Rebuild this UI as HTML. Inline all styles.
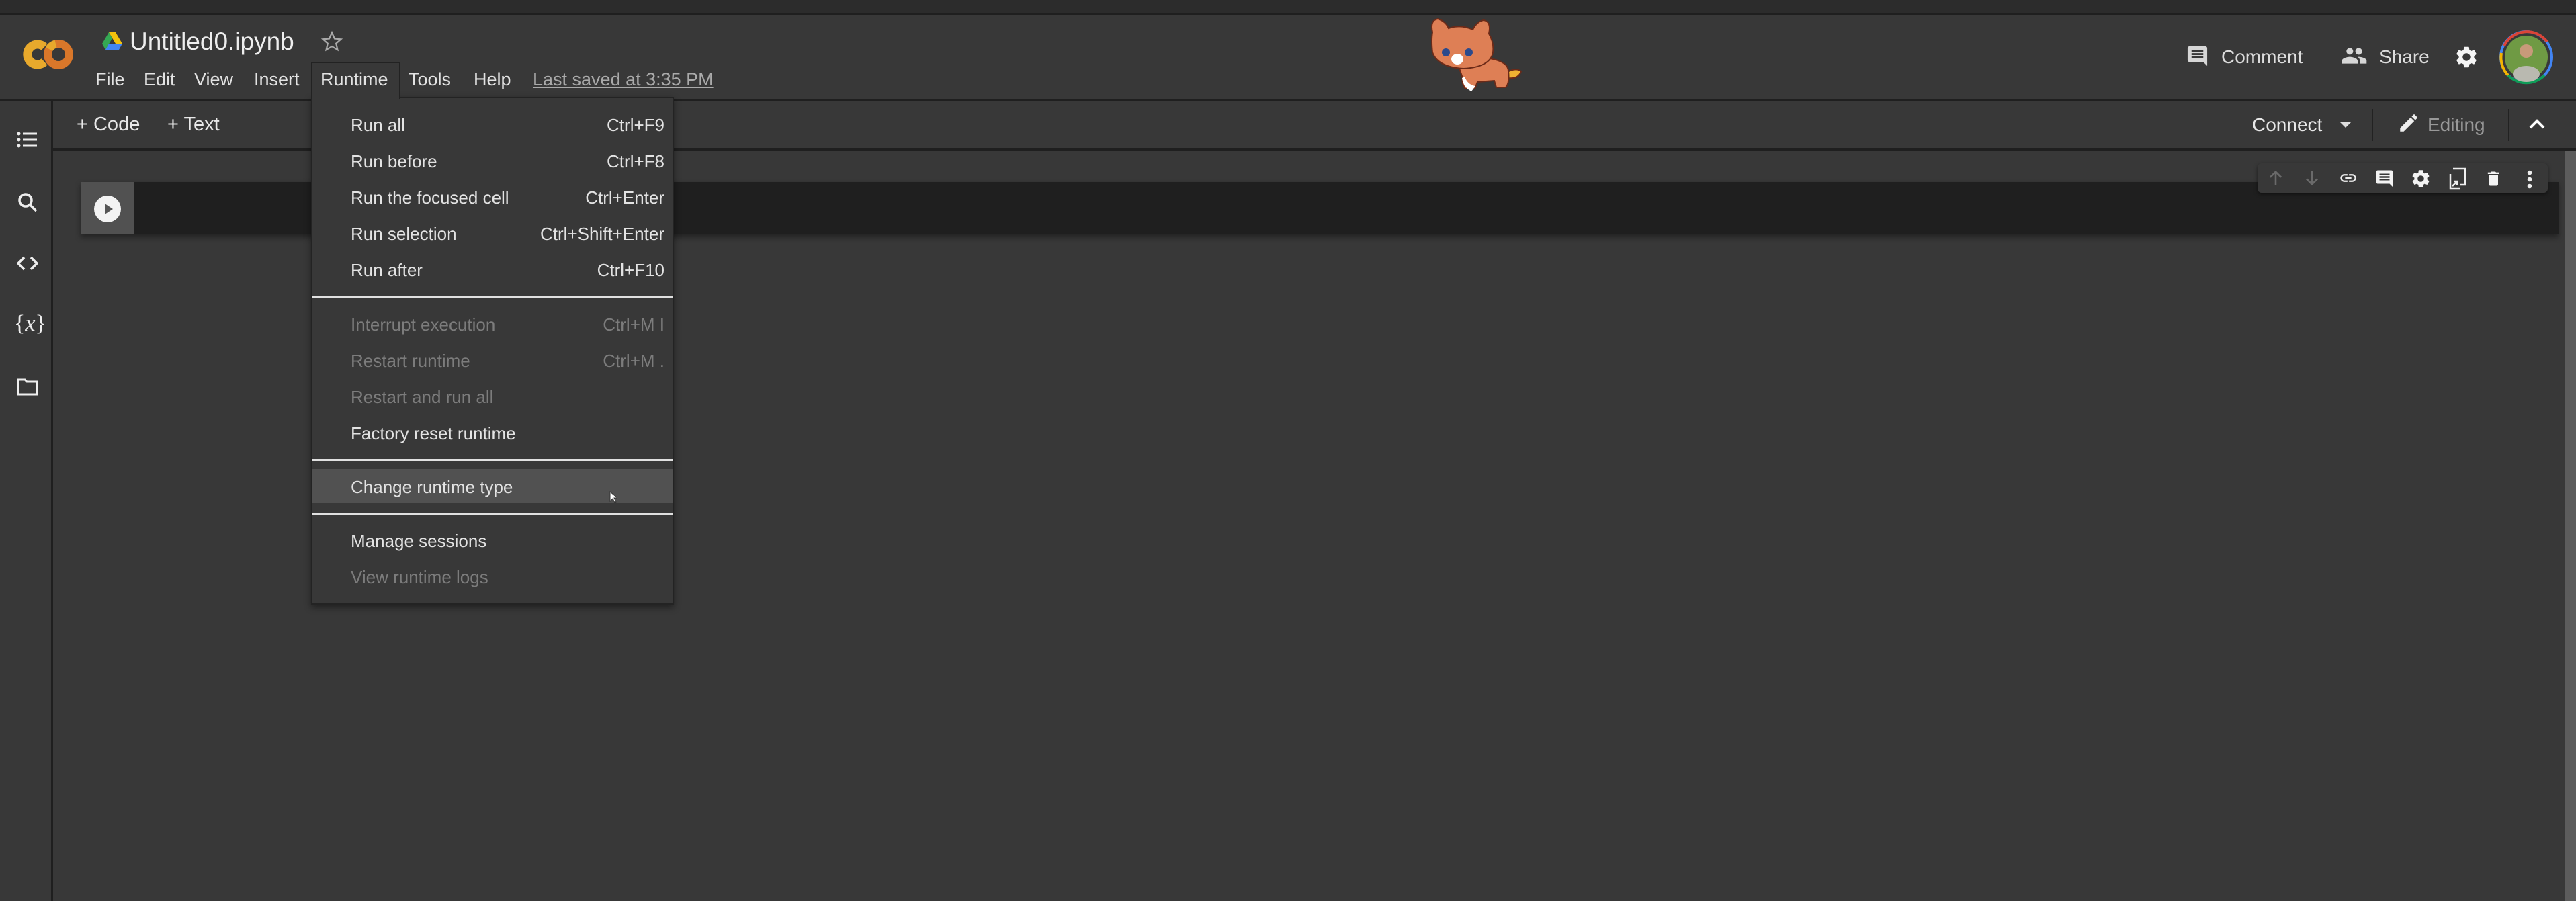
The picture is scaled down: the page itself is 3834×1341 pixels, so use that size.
<!DOCTYPE html>
<html><head><meta charset="utf-8"><style>
*{margin:0;padding:0;box-sizing:border-box}
body{width:3834px;height:1341px;background:#383838;font-family:"Liberation Sans",sans-serif;color:#e3e3e3;position:relative;overflow:hidden}
.a{position:absolute}
.t{position:absolute;white-space:nowrap}
svg{position:absolute;display:block}
.mi{position:absolute;left:522px;font-size:26px;line-height:30px;color:#e3e3e3}
.sc{position:absolute;right:14px;font-size:26px;line-height:30px;color:#e3e3e3}
.dis{color:#7c7c7c}
.sep{position:absolute;left:2px;right:2px;height:3px;background:#e0e0e0}
</style></head><body>
<div class="a" style="left:0;top:0;width:3834px;height:19px;background:#2c2c2c"></div>
<div class="a" style="left:0;top:19px;width:3834px;height:3px;background:#1f1f1f"></div>
<div class="a" style="left:0;top:148px;width:3834px;height:3px;background:#1f1f1f"></div>
<div class="a" style="left:77px;top:221px;width:3757px;height:3px;background:#1f1f1f"></div>
<div class="a" style="left:76px;top:151px;width:3px;height:1190px;background:#1f1f1f"></div>

<!-- logo -->
<svg style="left:28px;top:56px" width="84" height="50" viewBox="0 0 84 50">
<path d="M38 14 A15 15 0 1 0 38 36" fill="none" stroke="#e8a92c" stroke-width="13"/>
<circle cx="59" cy="25" r="16" fill="none" stroke="#d9772a" stroke-width="12"/>
<path d="M45 17 A16 16 0 0 1 55 9.5" stroke="#e8a92c" stroke-width="12" fill="none"/>
</svg>
<!-- drive icon -->
<svg style="left:152px;top:48px" width="30" height="28" viewBox="0 0 30 28">
<path d="M10 0h10l10 17h-10z" fill="#f4c20d"/><path d="M10 0l-10 17 5 9 10-17z" fill="#34a853"/><path d="M5 26h20l5-9H10z" fill="#4285f4"/>
</svg>
<div class="t" style="left:193px;top:41px;font-size:37px;color:#eee">Untitled0.ipynb</div>
<svg style="left:477px;top:45px" width="34" height="34" viewBox="0 0 24 24"><path d="M12 2.5l2.8 6.3 6.7.6-5.1 4.5 1.5 6.6L12 17l-5.9 3.5 1.5-6.6-5.1-4.5 6.7-.6z" fill="none" stroke="#aaa" stroke-width="1.6"/></svg>
<div class="t" style="left:142px;top:103px;font-size:27px">File</div>
<div class="t" style="left:214px;top:103px;font-size:27px">Edit</div>
<div class="t" style="left:289px;top:103px;font-size:27px">View</div>
<div class="t" style="left:378px;top:103px;font-size:27px">Insert</div>
<div class="a" style="left:463px;top:92px;width:133px;height:56px;border:2px solid #222;border-bottom:none;background:#383838;z-index:2"></div>
<div class="t" style="left:477px;top:103px;font-size:27px;z-index:3">Runtime</div>
<div class="t" style="left:608px;top:103px;font-size:27px">Tools</div>
<div class="t" style="left:705px;top:103px;font-size:27px">Help</div>
<div class="t" style="left:793px;top:103px;font-size:27px;color:#aaa;text-decoration:underline">Last saved at 3:35 PM</div>

<!-- cat -->
<svg style="left:2110px;top:24px" width="160" height="118" viewBox="0 0 160 118">
<g stroke="#6b2a18" stroke-width="2">
<path d="M132 84 q14-8 22-2 q-4 12-20 10z" fill="#f0b232"/>
<path d="M60 72 q10-14 40-10 q35 4 35 20 q2 18-4 24 h-14 l-3-10 -25 2 -4 10 h-14 q-6-8-4-16 z" fill="#de7f55"/>
<path d="M22 24 q-4-18 8-20 q12 4 16 14 q18-6 36 2 q6-12 16-14 q12 2 8 20 q8 14 6 28 q-4 22-44 24 q-38-2-46-24 q-2-18 0-30z" fill="#de7f55"/>
</g>
<circle cx="42" cy="54" r="6" fill="#2c4a8c"/><circle cx="76" cy="54" r="6" fill="#2c4a8c"/>
<ellipse cx="59" cy="64" rx="9" ry="8" fill="#fff"/>
<path d="M70 90 q4 12 16 14 l-6 8 q-12-6-14-20z" fill="#fff"/>
</svg>

<!-- right header -->
<svg style="left:3253px;top:66px" width="35" height="35" viewBox="0 0 24 24"><path d="M21.99 4c0-1.1-.89-2-1.99-2H4c-1.1 0-2 .9-2 2v12c0 1.1.9 2 2 2h14l4 4-.01-18zM18 14H6v-2h12v2zm0-3H6V9h12v2zm0-3H6V6h12v2z" fill="#d6d6d6"/></svg>
<div class="t" style="left:3306px;top:69px;font-size:28px;color:#ddd">Comment</div>
<svg style="left:3484px;top:66px" width="40" height="34" viewBox="0 0 24 20"><path d="M16 9c1.66 0 2.99-1.34 2.99-3S17.66 3 16 3c-1.66 0-3 1.34-3 3s1.340 3 3 3zm-8 0c1.66 0 2.99-1.34 2.99-3S9.66 3 8 3C6.34 3 5 4.34 5 6s1.34 3 3 3zm0 2c-2.33 0-7 1.17-7 3.5V17h14v-2.5c0-2.33-4.67-3.5-7-3.5zm8 0c-.29 0-.62.02-.97.05 1.16.84 1.97 1.97 1.97 3.45V17h6v-2.5c0-2.33-4.67-3.5-7-3.5z" fill="#d6d6d6"/></svg>
<div class="t" style="left:3541px;top:69px;font-size:28px;color:#ddd">Share</div>
<svg style="left:3652px;top:66px" width="38" height="38" viewBox="0 0 24 24"><path d="M19.14 12.94c.04-.3.06-.61.06-.94 0-.32-.02-.64-.07-.94l2.03-1.58a.49.49 0 00.12-.61l-1.92-3.32a.49.49 0 00-.59-.22l-2.39.96c-.5-.38-1.03-.7-1.62-.94l-.36-2.54a.48.48 0 00-.48-.41h-3.84a.48.48 0 00-.47.41l-.36 2.54c-.59.24-1.13.57-1.62.94l-2.39-.96a.49.49 0 00-.59.22L2.74 8.87c-.12.21-.08.47.12.61l2.03 1.58c-.05.3-.09.63-.09.94s.02.64.07.94l-2.03 1.58a.49.49 0 00-.12.61l1.92 3.32c.12.22.37.29.59.22l2.39-.96c.5.38 1.03.7 1.62.94l.36 2.54c.05.24.24.41.48.41h3.84c.24 0 .44-.17.47-.41l.36-2.54c.59-.24 1.13-.56 1.62-.94l2.39.96c.22.08.47 0 .59-.22l1.92-3.32c.12-.22.07-.47-.12-.61l-2.01-1.58zM12 15.6A3.6 3.6 0 1112 8.4a3.6 3.6 0 010 7.2z" fill="#f5f5f5"/></svg>
<svg style="left:3719px;top:44px" width="82" height="82" viewBox="0 0 82 82">
<circle cx="41" cy="41" r="38" fill="none" stroke="#4285f4" stroke-width="4"/>
<path d="M8 24 A38 38 0 0 1 72 18" stroke="#db4437" stroke-width="4" fill="none"/>
<path d="M14 68 A38 38 0 0 1 4 35" stroke="#f4b400" stroke-width="4" fill="none"/>
<path d="M68 68 A38 38 0 0 1 14 68" stroke="#0f9d58" stroke-width="4" fill="none"/>
<circle cx="41" cy="41" r="32" fill="#6f9a44"/>
<ellipse cx="41" cy="66" rx="20" ry="12" fill="#b9b9b0"/>
<circle cx="41" cy="32" r="10" fill="#c89a7a"/>
</svg>

<!-- toolbar -->
<div class="t" style="left:114px;top:169px;font-size:29px;color:#e8e8e8">+ Code</div>
<div class="t" style="left:249px;top:169px;font-size:29px;color:#e8e8e8">+ Text</div>
<div class="t" style="left:3352px;top:170px;font-size:28px;color:#e8e8e8">Connect</div>
<svg style="left:3483px;top:181px" width="16" height="10" viewBox="0 0 16 10"><path d="M0 1h16L8 9z" fill="#ddd"/></svg>
<div class="a" style="left:3530px;top:162px;width:2px;height:48px;background:#222"></div>
<svg style="left:3568px;top:164px" width="34" height="38" viewBox="0 0 24 24"><path d="M3 17.25V21h3.75L17.81 9.94l-3.75-3.75L3 17.25zM20.71 7.04a1 1 0 000-1.41l-2.34-2.340a1 1 0 00-1.41 0l-1.83 1.83 3.75 3.75 1.83-1.83z" fill="#eee"/></svg>
<div class="t" style="left:3613px;top:170px;font-size:28px;color:#999">Editing</div>
<div class="a" style="left:3733px;top:162px;width:2px;height:48px;background:#222"></div>
<svg style="left:3764px;top:176px" width="24" height="16" viewBox="0 0 24 16"><path d="M2 14L12 4l10 10" stroke="#fff" stroke-width="4" fill="none"/></svg>

<!-- sidebar icons -->
<svg style="left:25px;top:196px" width="30" height="24" viewBox="0 0 30 24"><g fill="#eee"><circle cx="3" cy="3" r="2.5"/><circle cx="3" cy="12" r="2.5"/><circle cx="3" cy="21" r="2.5"/><rect x="9" y="1.5" width="21" height="3"/><rect x="9" y="10.5" width="21" height="3"/><rect x="9" y="19.5" width="21" height="3"/></g></svg>
<svg style="left:26px;top:286px" width="30" height="30" viewBox="0 0 30 30"><circle cx="12" cy="12" r="9" fill="none" stroke="#eee" stroke-width="3.5"/><path d="M18 18l10 10" stroke="#eee" stroke-width="3.5"/></svg>
<svg style="left:25px;top:381px" width="32" height="22" viewBox="0 0 32 22"><path d="M11 2L2 11l9 9M21 2l9 9-9 9" stroke="#eee" stroke-width="3.5" fill="none"/></svg>
<div class="t" style="left:21px;top:463px;font-size:34px;font-family:'Liberation Serif',serif;color:#eee">{<i>x</i>}</div>
<svg style="left:25px;top:563px" width="32" height="26" viewBox="0 0 32 26"><path d="M2 2h10l3 3h15v19H2z" fill="none" stroke="#eee" stroke-width="3"/></svg>

<!-- cell -->
<div class="a" style="left:120px;top:271px;width:3688px;height:78px;background:#1f1f1f;box-shadow:0 4px 8px rgba(0,0,0,.4)"></div>
<div class="a" style="left:120px;top:271px;width:80px;height:78px;background:#515151"></div>
<svg style="left:140px;top:291px" width="40" height="40" viewBox="0 0 40 40"><circle cx="20" cy="20" r="20" fill="#f3f3f3"/><path d="M16 12v16l12-8z" fill="#555"/></svg>
<div class="a" style="left:3817px;top:224px;width:17px;height:1117px;background:#5c5c5c"></div>

<!-- cell toolbar -->
<div class="a" style="left:3360px;top:243px;width:432px;height:44px;background:#383838;border-radius:6px;box-shadow:0 2px 6px rgba(0,0,0,.5)"></div>
<svg style="left:3373px;top:251px" width="28" height="28" viewBox="0 0 24 24"><path d="M12 21V4M5 11l7-7 7 7" stroke="#6a6a6a" stroke-width="2.2" fill="none"/></svg>
<svg style="left:3427px;top:251px" width="28" height="28" viewBox="0 0 24 24"><path d="M12 3v17M5 13l7 7 7-7" stroke="#6a6a6a" stroke-width="2.2" fill="none"/></svg>
<svg style="left:3480px;top:251px" width="30" height="28" viewBox="0 0 24 24"><path d="M3.9 12c0-1.71 1.39-3.1 3.1-3.1h4V7H7a5 5 0 000 10h4v-1.9H7c-1.71 0-3.1-1.39-3.1-3.1zM8 13h8v-2H8v2zm9-6h-4v1.9h4c1.71 0 3.1 1.39 3.1 3.1s-1.39 3.1-3.1 3.1h-4V17h4a5 5 0 000-10z" fill="#eee"/></svg>
<svg style="left:3534px;top:250px" width="30" height="32" viewBox="0 0 24 24"><path d="M21.99 4c0-1.1-.89-2-1.99-2H4c-1.1 0-2 .9-2 2v12c0 1.1.9 2 2 2h14l4 4-.01-18zM18 14H6v-2h12v2zm0-3H6V9h12v2zm0-3H6V6h12v2z" fill="#f3f3f3"/></svg>
<svg style="left:3587px;top:250px" width="32" height="32" viewBox="0 0 24 24"><path d="M19.14 12.94c.04-.3.06-.61.06-.94 0-.32-.02-.64-.07-.94l2.03-1.58a.49.49 0 00.12-.61l-1.92-3.32a.49.49 0 00-.59-.22l-2.39.96c-.5-.38-1.03-.7-1.62-.94l-.36-2.54a.48.48 0 00-.48-.41h-3.84a.48.48 0 00-.47.41l-.36 2.54c-.59.24-1.13.57-1.62.94l-2.39-.96a.49.49 0 00-.59.22L2.74 8.87c-.12.21-.08.47.12.61l2.03 1.58c-.05.3-.09.63-.09.94s.02.64.07.94l-2.03 1.58a.49.49 0 00-.12.61l1.92 3.32c.12.22.37.29.59.22l2.39-.96c.5.38 1.03.7 1.62.94l.36 2.54c.05.24.24.41.48.41h3.84c.24 0 .44-.17.47-.41l.36-2.54c.59-.24 1.13-.56 1.62-.94l2.39.96c.22.08.47 0 .59-.22l1.92-3.32c.12-.22.07-.47-.12-.61l-2.01-1.58zM12 15.6A3.6 3.6 0 1112 8.4a3.6 3.6 0 010 7.2z" fill="#f3f3f3"/></svg>
<svg style="left:3641px;top:249px" width="32" height="34" viewBox="0 0 32 34"><path d="M10 2h18v24H20" stroke="#eee" stroke-width="2.5" fill="none"/><path d="M6 10v22h14" stroke="#eee" stroke-width="2.5" fill="none"/><path d="M9 28l7-7M11 21h5v5" stroke="#eee" stroke-width="2.5" fill="none"/></svg>
<svg style="left:3697px;top:250px" width="28" height="32" viewBox="0 0 24 24"><path d="M6 19c0 1.1.9 2 2 2h8c1.1 0 2-.9 2-2V7H6v12zM19 4h-3.5l-1-1h-5l-1 1H5v2h14V4z" fill="#f3f3f3"/></svg>
<svg style="left:3757px;top:253px" width="16" height="28" viewBox="0 0 16 28"><g fill="#eee"><circle cx="8" cy="4" r="3.3"/><circle cx="8" cy="14" r="3.3"/><circle cx="8" cy="24" r="3.3"/></g></svg>

<!-- runtime menu -->
<div class="a" style="left:463px;top:144px;width:540px;height:756px;background:#383838;border:2px solid #232323;box-shadow:0 4px 10px rgba(0,0,0,.45);z-index:1"></div>
<div class="a" style="left:465px;top:143px;width:129px;height:4px;background:#383838;z-index:2"></div>
<div class="a" style="left:463px;top:144px;width:540px;height:756px;z-index:3">
<div class="mi" style="left:59px;top:27px">Run all</div><div class="sc" style="top:27px">Ctrl+F9</div>
<div class="mi" style="left:59px;top:81px">Run before</div><div class="sc" style="top:81px">Ctrl+F8</div>
<div class="mi" style="left:59px;top:135px">Run the focused cell</div><div class="sc" style="top:135px">Ctrl+Enter</div>
<div class="mi" style="left:59px;top:189px">Run selection</div><div class="sc" style="top:189px">Ctrl+Shift+Enter</div>
<div class="mi" style="left:59px;top:243px">Run after</div><div class="sc" style="top:243px">Ctrl+F10</div>
<div class="sep" style="top:296px"></div>
<div class="mi dis" style="left:59px;top:324px">Interrupt execution</div><div class="sc dis" style="top:324px">Ctrl+M I</div>
<div class="mi dis" style="left:59px;top:378px">Restart runtime</div><div class="sc dis" style="top:378px">Ctrl+M .</div>
<div class="mi dis" style="left:59px;top:432px">Restart and run all</div>
<div class="mi" style="left:59px;top:486px">Factory reset runtime</div>
<div class="sep" style="top:539px"></div>
<div class="a" style="left:2px;right:2px;top:554px;height:51px;background:#515151"></div>
<div class="mi" style="left:59px;top:566px">Change runtime type</div>
<svg style="left:444px;top:587px" width="12" height="18" viewBox="0 0 12 18"><path d="M1 1v14l4-4 3 6 2-1-3-6h5z" fill="#fff" stroke="#333" stroke-width="1"/></svg>
<div class="sep" style="top:619px"></div>
<div class="mi" style="left:59px;top:646px">Manage sessions</div>
<div class="mi dis" style="left:59px;top:700px">View runtime logs</div>
</div>
</body></html>
